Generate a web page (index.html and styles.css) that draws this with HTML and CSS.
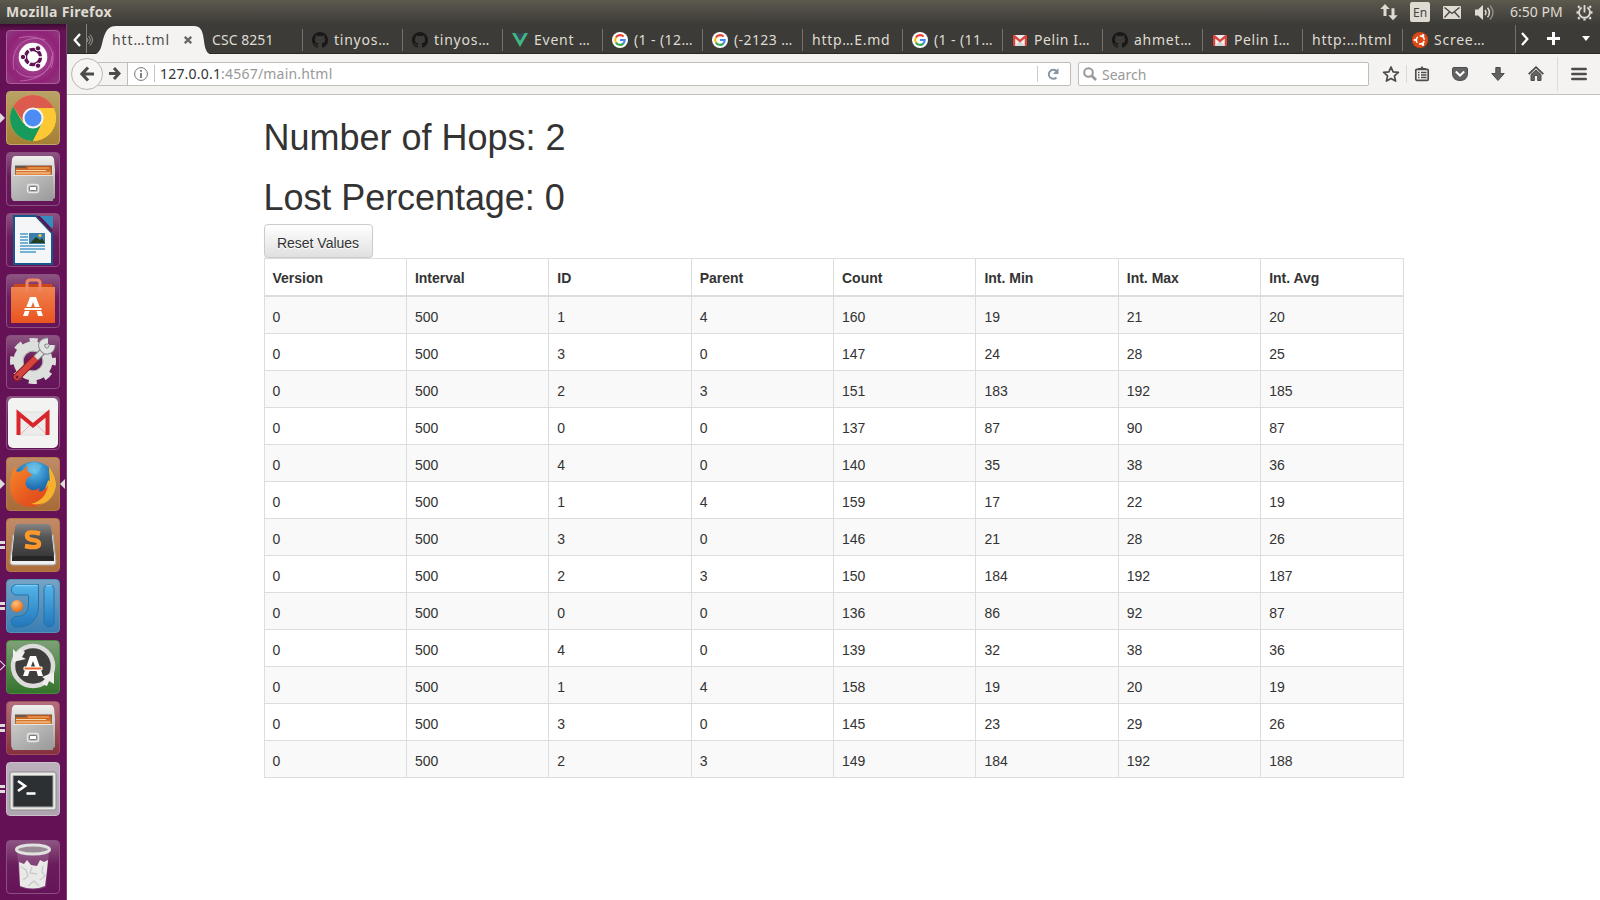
FILE: index.html
```html
<!DOCTYPE html>
<html lang="en">
<head>
<meta charset="utf-8">
<title>Mozilla Firefox</title>
<link rel="stylesheet" href="styles.css">
</head>
<body>
<svg class="defs" width="0" height="0" aria-hidden="true">
  <defs>
    <linearGradient id="metal" x1="0" y1="0" x2="0" y2="1"><stop offset="0" stop-color="#f0f0ef"/><stop offset="1" stop-color="#9b9b9a"/></linearGradient>
    <linearGradient id="drawer" x1="0" y1="0" x2="1" y2="1"><stop offset="0" stop-color="#c9c9c8"/><stop offset="1" stop-color="#999"/></linearGradient>
    <linearGradient id="folders" x1="0" y1="0" x2="0" y2="1"><stop offset="0" stop-color="#b9541d"/><stop offset="1" stop-color="#e98a3c"/></linearGradient>
    <linearGradient id="bag" x1="0" y1="0" x2="0" y2="1"><stop offset="0" stop-color="#f08350"/><stop offset="1" stop-color="#e9541f"/></linearGradient>
    <linearGradient id="dark" x1="0" y1="0" x2="0" y2="1"><stop offset="0" stop-color="#858585"/><stop offset=".4" stop-color="#555"/><stop offset="1" stop-color="#3a3a3a"/></linearGradient>
    <linearGradient id="blue" x1="0" y1="0" x2="0" y2="1"><stop offset="0" stop-color="#55b5e9"/><stop offset="1" stop-color="#2277bb"/></linearGradient>
    <linearGradient id="fox" x1="0" y1="0" x2="1" y2="1"><stop offset="0" stop-color="#f58a2b"/><stop offset=".6" stop-color="#e6551f"/><stop offset="1" stop-color="#d8451a"/></linearGradient>
    <radialGradient id="globe" cx=".5" cy=".2" r=".8"><stop offset="0" stop-color="#5bc3ee"/><stop offset=".5" stop-color="#2272b5"/><stop offset="1" stop-color="#123a78"/></radialGradient>
    <radialGradient id="ball" cx=".4" cy=".3" r=".7"><stop offset="0" stop-color="#ffc184"/><stop offset="1" stop-color="#ee6c0c"/></radialGradient>
    <symbol id="github" viewBox="0 0 16 16"><path fill="#191717" d="M8 0C3.58 0 0 3.58 0 8c0 3.54 2.29 6.53 5.47 7.59.4.07.55-.17.55-.38 0-.19-.01-.82-.01-1.49-2.01.37-2.53-.49-2.69-.94-.09-.23-.48-.94-.82-1.13-.28-.15-.68-.52-.01-.53.63-.01 1.08.58 1.23.82.72 1.21 1.87.87 2.33.66.07-.52.28-.87.51-1.07-1.78-.2-3.64-.89-3.64-3.95 0-.87.31-1.59.82-2.15-.08-.2-.36-1.02.08-2.12 0 0 .67-.21 2.2.82a7.6 7.6 0 0 1 4 0c1.53-1.04 2.2-.82 2.2-.82.44 1.1.16 1.92.08 2.12.51.56.82 1.27.82 2.15 0 3.07-1.87 3.75-3.65 3.95.29.25.54.73.54 1.48 0 1.07-.01 1.93-.01 2.2 0 .21.15.46.55.38A8.01 8.01 0 0 0 16 8c0-4.42-3.58-8-8-8z"/></symbol>
    <symbol id="google" viewBox="0 0 16 16"><circle cx="8" cy="8" r="8" fill="#fff"/><g fill="none" stroke-width="2.1"><path stroke="#ea4335" d="M11.6 4.6A4.8 4.8 0 0 0 3.9 5.6"/><path stroke="#fbbc05" d="M3.9 5.5a4.8 4.8 0 0 0 0 5"/><path stroke="#34a853" d="M3.9 10.4a4.8 4.8 0 0 0 7.4 1.2"/><path stroke="#4285f4" d="M11.2 11.7A4.8 4.8 0 0 0 12.7 8H8"/></g></symbol>
    <symbol id="gmail" viewBox="0 0 16 16"><path fill="#eee" d="M1 3h14v11H1z"/><path fill="#d5d5d5" d="m3 14 5-5 5 5z"/><path fill="#d9453a" d="M1 3h1.800L8 7.600 13.200 3H15v11h-2.200V6.500L8 10.500 3.200 6.500V14H1z"/></symbol>
    <symbol id="cabinet" viewBox="0 0 54 54"><path fill="url(#metal)" d="M9 4h36q2 0 3 3l1 11v27q0 2-2 2H7q-2 0-2-2V18L6 7q1-3 3-3z"/><path fill="#6b5748" d="M9 13.500h37v9.500H9z"/><path fill="url(#folders)" d="M9.500 16h10l1-2h25v9h-36z"/><path stroke="#f7d5aa" d="M10 18.500h30M10 21h34"/><path stroke="#ffba67" d="M22 16h21"/><path fill="url(#drawer)" d="M6 23h41v26H8q-2 0-2-3z"/><path stroke="#e4e4e4" d="M7 23.500h40"/><rect x="21.500" y="32.500" width="11" height="8" rx="2" fill="none" stroke="#e7e7e7" stroke-width="1.400"/><rect x="23.500" y="34.500" width="7" height="4" rx="1" fill="#fff" stroke="#777"/></symbol>
  </defs>
</svg>

<header class="panel">
  <span class="panel-title">Mozilla Firefox</span>
  <div class="indicators">
    <svg width="18" height="18" viewBox="0 0 18 18"><path fill="#dfdbd2" d="M5 1 .3 6H3.500v7h3V6h3.200zM13 17.200l4.700-5H14.500v-7h-3v7H8.300z"/></svg>
    <span class="lang">En</span>
    <svg width="18" height="13" viewBox="0 0 18 13"><rect width="18" height="13" rx="1" fill="#dfdbd2"/><path fill="none" stroke="#45433e" stroke-width="1.300" d="m1.500 1.500 7.500 6 7.500-6M1.500 11.500 6.500 6M16.500 11.500l-5-5.500"/></svg>
    <svg class="volume" width="20" height="17" viewBox="0 0 20 17"><path fill="#dfdbd2" d="M0 5.500h3L8 1v15l-5-4.500H0z"/><g fill="none" stroke-width="1.500"><path stroke="#dfdbd2" d="M10 6q2 2.500 0 5M12.500 3.800q4 4.700 0 9.400"/><path stroke="#8e8b84" d="M15 1.500q6 7 0 14"/></g></svg>
    <span class="clock">6:50 PM</span>
    <svg width="17" height="17" viewBox="0 0 17 17"><g fill="none" stroke="#dfdbd2"><path stroke-width="1.900" d="M5.700 3.500a5.500 5.500 0 1 0 5.600 0"/><path stroke-width="1.800" d="M8.500 1v7.500"/><path stroke-width="2.300" d="m3.600 3.600-1.500-1.500m11.300 1.500 1.500-1.500M2.500 8.500h-2m14 0h2M3.600 13.400l-1.500 1.500m11.300-1.500 1.500 1.500M8.500 14.500v2"/></g></svg>
  </div>
</header>

<div class="desktop">
<nav class="launcher">
  <div class="tile ubuntu"><svg viewBox="0 0 54 54"><g fill="none" stroke="#df9dd0" opacity=".5"><path d="M8 40C3 15 22 4 39 10"/><path d="M13 8c23-6 40 10 32 30"/><path d="M47 22c0 25-25 32-37 18"/><path d="M14 51C32 50 45 42 46 26"/></g><circle cx="27" cy="27" r="14.300" fill="#fff"/><circle cx="27" cy="27" r="7.500" fill="none" stroke="#611353" stroke-width="3.500"/><path stroke="#fff" stroke-width="1.500" d="M27 27H39M27 27l-6-10.400M27 27l-6 10.400"/><circle cx="27" cy="27" r="5.500" fill="#fff"/><g fill="#611353" stroke="#fff"><circle cx="17" cy="27" r="2.700"/><circle cx="32" cy="18.300" r="2.700"/><circle cx="32" cy="35.700" r="2.700"/></g></svg></div>
  <div class="tile chrome running"><svg viewBox="0 0 54 54"><circle cx="27" cy="27" r="23" fill="#fcc934"/><path fill="#dc5a4e" d="M7.100 15.500a23 23 0 0 1 39.800 0L48 17H27L18 32z"/><path fill="#169b5d" d="M7.100 15.500A23 23 0 0 0 27 50l9-17-9 4-10-5z"/><path fill="#fcc934" d="M27 17h20.700A23 23 0 0 1 27 50l9-18z"/><circle cx="27" cy="27" r="10.500" fill="#f5f5f5"/><circle cx="27" cy="27" r="8.500" fill="#4d8cf5"/></svg></div>
  <div class="tile"><svg><use href="#cabinet"/></svg></div>
  <div class="tile"><svg viewBox="0 0 54 54"><path fill="#f5f6f7" stroke="#14578a" stroke-width="2" d="M8 3h22l16 17v31H8z"/><path fill="#2d83b5" d="M30 3h16v17z"/><path fill="#5c1450" d="m30 3 16 17v-4L34 3z"/><path fill="#388bbf" d="M34 3h13v12z"/><path stroke="#4a9ac7" stroke-width="1.500" d="M14 21h8M14 24h8M14 27h8M14 30h8M14 33h25M14 36h25M14 39h16"/><path fill="#3c7faa" d="M23 20h16v11H23z"/><path fill="#243e20" d="m24 30 6-6 4 3 2-2 3 5z"/><circle cx="34" cy="22.500" r="1.500" fill="#f5ce42"/></svg></div>
  <div class="tile"><svg viewBox="0 0 54 54"><path fill="#c9451c" d="M7 14 8 10h38l1 4z"/><path fill="url(#bag)" d="M5 13h44v36H5z"/><path fill="none" stroke="#ef8767" stroke-width="3" d="M21 17V9q0-3 3-3h7q3 0 3 3v8"/><path fill="#fff" d="M24 23h6l7 19h-5l-1.500-5h-7L22 42h-5zm3 5-2.200 6h4.400z"/><path fill="#fff" stroke="#e9632c" d="M18 33.500h18v3H18z"/></svg></div>
  <div class="tile"><svg viewBox="0 0 54 54"><circle cx="27" cy="26" r="20.500" fill="none" stroke="#dcdedc" stroke-width="5" stroke-dasharray="8.050 8.050" stroke-dashoffset="4"/><circle cx="27" cy="26" r="14.500" fill="none" stroke="#dddfdd" stroke-width="10"/><circle cx="27" cy="26" r="10" fill="none" stroke="#aaa"/><path stroke="#8c1d1d" stroke-width="8" stroke-linecap="round" d="m11 42 19-19"/><path stroke="#d6443f" stroke-width="6" stroke-linecap="round" d="m11 42 19-19"/><path fill="none" stroke="#777" stroke-width="7" d="m30 23 8-8"/><path fill="none" stroke="#e0e2e2" stroke-width="5" d="m30 23 8-8"/><path fill="none" stroke="#8a8c8c" stroke-width="7" d="M42 6c-6 0-8 4-5 8s9 2 9-4"/><path fill="none" stroke="#e0e2e2" stroke-width="5" d="M42 6c-6 0-8 4-5 8s9 2 9-4"/><circle cx="11" cy="42" r="1.500" fill="#631b3c"/></svg></div>
  <div class="tile"><svg viewBox="0 0 54 54"><rect x="2" y="2" width="50" height="50" rx="5" fill="#f3f3f2"/><path fill="#ececeb" stroke="#ddd" d="M12 16h31v23H12z"/><path fill="none" stroke="#e3b4b0" d="m15 38 9-9m16 9-9-9"/><path fill="none" stroke="#d9262c" stroke-width="4" d="M12.500 39V17.500l14.500 12 14.500-12V39"/></svg></div>
  <div class="tile firefox running focused"><svg viewBox="0 0 54 54"><circle cx="28" cy="26" r="21.500" fill="url(#globe)"/><path fill="#85cbea" opacity=".4" d="M20 8q9-6 16 1l-5 8-9-2z"/><path fill="#f9c932" d="M43 10q12 16 2 30-9 11-20 8l13-13 4-11 2 2z"/><path fill="url(#fox)" d="M9 9q0 3 2 6l5-1q3-4 6-5-2 4 0 6 5 2 3 4-4 1-5 5-2 6 5 9 4 1 9-2-3 5 2 3 6-3 7-10l4 3q0 20-21 23Q6 50 4 31 3 20 9 9z"/><path fill="#f6b02d" d="m43 10 2 15-3-2q1 19-17 24 21 3 25-18 0-10-7-19z"/></svg></div>
  <div class="tile sublime multi"><svg viewBox="0 0 54 54"><path fill="#eee" stroke="#aaa" d="M7 17 4 44q0 3 3 3h40q3 0 3-3l-3-27z"/><path fill="#262626" d="m9 17-3 23v3h42v-3l-3-23z"/><path fill="url(#dark)" d="M13 6h28q3 0 4 3l3 28q0 1-2 1H8q-2 0-2-1l3-28q1-3 4-3z"/><path fill="none" stroke="#ff982b" stroke-width="4.500" d="M34 15.500q-13-3-13 2 0 4 6 4.500t6 4q0 5-14 2"/></svg></div>
  <div class="tile intellij multi"><svg viewBox="0 0 54 54"><path fill="url(#blue)" stroke="#2373a8" d="M10.500 5.500h22V26q0 22-22 22a5 5 0 0 1 0-10.500q12 0 12-12V17q0-1-1-1h-11a5 5 0 0 1 0-10.500z"/><rect x="38" y="5.500" width="10" height="42.500" rx="5" fill="url(#blue)" stroke="#2373a8"/><path stroke="#83cdf5" stroke-width="1.500" stroke-linecap="round" d="M10 6.500h21m10 0h4"/><circle cx="11" cy="27" r="6" fill="url(#ball)"/></svg></div>
  <div class="tile updater elsewhere"><svg viewBox="0 0 54 54"><circle cx="27" cy="26" r="20" fill="#3e3e3d" stroke="#dcdcda" stroke-width="4.500"/><path fill="#eeeeec" d="M7 9v13l13-3-4-2 3-5-5-3-3 4zM48 44V32l-12 5 3 2-3 5 5 2 2-5z"/><path fill="#fff" d="M24 16h6l7 20h-5l-1.500-5h-7L22 36h-5zm3 5-2.200 6h4.400z"/><path fill="#ed6527" stroke="#fff" d="M18 27h18v3H18z"/></svg></div>
  <div class="tile files multi"><svg><use href="#cabinet"/></svg></div>
  <div class="tile terminal multi"><svg viewBox="0 0 54 54"><rect x="4" y="10" width="46" height="38" rx="2" fill="#e9e9e8" stroke="#8b8b89"/><path fill="#2d3032" stroke="#aaa" d="M7 13.500h40V45H7z"/><path fill="none" stroke="#fff" stroke-width="2.700" d="m12 19 7 5-7 5M20.500 31.500h9"/></svg></div>
  <div class="tile trash"><svg viewBox="0 0 54 54"><path fill="#a97aa2" opacity=".4" d="m11 12 3 35q13 5 26 0l3-35z"/><path fill="#e9e9e7" d="m14 46-1-24 5 2 3-4 4 5 6 1 3-6 4 2 4-2-1 10-2 16q-12 5-25 0z"/><path fill="none" stroke="#cacac8" stroke-width="1.300" d="m15 27 5 3 2 6-5 4m9-13-2 6 7 1m6-8-1 6 3 4-5 4m-12 6 6-5 5 5"/><ellipse cx="27" cy="9.500" rx="16.500" ry="4.500" fill="#9a8a95" stroke="#e1e2df" stroke-width="3"/></svg></div>
</nav>

<main class="browser">
  <div class="tabs">
    <div class="scroll-left"><svg width="8" height="14" viewBox="0 0 8 14"><path fill="none" stroke="#fff" stroke-width="2.300" d="M7 1 1.700 7 7 13"/></svg></div>
    <div class="sound"><svg width="6" height="12" viewBox="0 0 6 12"><path fill="none" stroke="#999" d="M0 4q2 2 0 4M1.500 2q3.500 4 0 8M3 .5q5 5.500 0 11"/></svg></div>
    <div class="tab active">
      <svg class="tab-shape" width="122" height="29" viewBox="0 0 122 29"><path fill="#f4f3f1" d="M0 29c11-1 9-13 13-21 2-5 5-8 11-8h78c6 0 8 4 9 9 2 9 1 19 10 20z"/></svg>
      <span>htt…tml</span><svg class="close" width="8" height="8" viewBox="0 0 8 8"><path stroke="#686868" stroke-width="2.300" d="m.8.8 6.400 6.400M7.200.8.8 7.200"/></svg>
    </div>
    <div class="tab second"><span>CSC 8251</span></div>
    <div class="tab"><svg><use href="#github"/></svg><span>tinyos…</span></div>
    <div class="tab"><svg><use href="#github"/></svg><span>tinyos…</span></div>
    <div class="tab"><svg viewBox="0 0 16 16"><path fill="#41b883" d="M0 1h3.500L8 8.700 12.500 1H16L8 15z"/><path fill="#35495e" d="M3.500 1h3L8 3.600 9.500 1h3L8 8.700z"/></svg><span>Event …</span></div>
    <div class="tab"><svg><use href="#google"/></svg><span class="calc">(1 - (12…</span></div>
    <div class="tab"><svg><use href="#google"/></svg><span class="calc">(-2123 …</span></div>
    <div class="tab"><span>http…E.md</span></div>
    <div class="tab"><svg><use href="#google"/></svg><span class="calc">(1 - (11…</span></div>
    <div class="tab"><svg><use href="#gmail"/></svg><span class="mail">Pelin I…</span></div>
    <div class="tab"><svg><use href="#github"/></svg><span>ahmet…</span></div>
    <div class="tab"><svg><use href="#gmail"/></svg><span class="mail">Pelin I…</span></div>
    <div class="tab"><span>http:…html</span></div>
    <div class="tab last"><svg viewBox="0 0 16 16"><circle cx="8" cy="8" r="8" fill="#dd4814"/><circle cx="8.300" cy="8" r="4" fill="none" stroke="#fff" stroke-width="1.500" stroke-dasharray="6.400 2" stroke-dashoffset="-1"/><g fill="#fff"><circle cx="2.800" cy="8" r="1.200"/><circle cx="11" cy="3.200" r="1.200"/><circle cx="11" cy="12.800" r="1.200"/></g></svg><span>Scree…</span></div>
    <div class="tab-tools">
      <svg width="8" height="14" viewBox="0 0 8 14"><path fill="none" stroke="#fff" stroke-width="2.300" d="m1 1 5.300 6L1 13"/></svg>
      <svg width="13" height="13" viewBox="0 0 13 13"><path stroke="#fff" stroke-width="3" d="M6.500 0v13M0 6.500h13"/></svg>
      <svg width="8" height="5" viewBox="0 0 8 5"><path fill="#fff" d="M0 0h8L4 5z"/></svg>
    </div>
  </div>

  <div class="toolbar">
    <div class="back"><svg width="14" height="16" viewBox="0 0 14 16"><path fill="none" stroke="#4c4c4c" stroke-width="3.200" d="M8 1.500 2 8l6 6.500M2 8h12"/></svg></div>
    <div class="address">
      <div class="forward"><svg width="12" height="13" viewBox="0 0 12 13"><path fill="none" stroke="#4c4c4c" stroke-width="3" d="M0 6.500h10M5 1l5 5.500L5 12"/></svg></div>
      <svg class="info" width="14" height="14" viewBox="0 0 14 14"><circle cx="7" cy="7" r="6.400" fill="none" stroke="#737373"/><path stroke="#737373" stroke-width="1.800" d="M7 6v5M7 3v1.800"/></svg>
      <span class="url">127.0.0.1<span class="path">:4567/main.html</span></span>
      <div class="reload"><svg width="12" height="12" viewBox="0 0 12 12"><path fill="none" stroke="#8796a5" stroke-width="2" d="M9.500 9.500a4.500 4.500 0 1 1 .3-6"/><path fill="#8796a5" d="M11.500 0v6H6z"/></svg></div>
    </div>
    <div class="search"><svg width="14" height="14" viewBox="0 0 14 14"><circle cx="5.500" cy="5.500" r="4.300" fill="none" stroke="#999" stroke-width="2"/><path stroke="#999" stroke-width="2.600" d="m8.500 8.500 4.500 4.500"/></svg><span>Search</span></div>
    <div class="actions">
      <svg width="18" height="18" viewBox="0 0 18 18"><path fill="none" stroke="#4c4c4c" stroke-width="1.700" stroke-linejoin="round" d="m9 2 2.100 4.900 5.300.5-4 3.500 1.200 5.200L9 13.400l-4.600 2.700 1.200-5.200-4-3.500 5.300-.5z"/></svg>
      <i class="rule short"></i>
      <svg class="library" width="16" height="16" viewBox="0 0 16 16"><rect x="1.800" y="3.300" width="12.400" height="11" rx="1" fill="none" stroke="#4c4c4c" stroke-width="1.700"/><path fill="#4c4c4c" d="M4 4V2h2.500L8 0l1.500 2H12v2z"/><path stroke="#4c4c4c" stroke-width="1.500" d="M4 6.500h1.500M7 6.500h5.500M4 9h1.500M7 9h5.500M4 11.500h1.500M7 11.500h5.500"/></svg>
      <svg width="16" height="14" viewBox="0 0 16 14"><path fill="#636363" stroke="#4c4c4c" d="M2 .5h12q1.500 0 1.500 1.500v4q0 7.500-7.500 7.500T.5 6V2Q.5.500 2 .5z"/><path fill="none" stroke="#fff" stroke-width="2" d="m3.800 4.500 4.200 4 4.200-4"/></svg>
      <svg width="14" height="14" viewBox="0 0 14 14"><path fill="#636363" stroke="#4c4c4c" d="M4.800.5h4.400v6h4L7 13.500.8 6.500h4z"/></svg>
      <svg width="16" height="15" viewBox="0 0 16 15"><path fill="none" stroke="#4c4c4c" stroke-width="1.800" d="m.7 8.200 7.300-7 7.300 7"/><path fill="#636363" stroke="#4c4c4c" d="M3 8.500 8 4l5 4.500v6H9.700v-5H6.300v5H3z"/></svg>
      <i class="rule"></i>
      <svg width="16" height="14" viewBox="0 0 16 14"><path stroke="#4c4c4c" stroke-width="2.500" stroke-linecap="round" d="M1.300 2h13.400M1.300 7h13.400M1.300 12h13.400"/></svg>
    </div>
  </div>

  <section class="page">
    <div class="container">
      <h1>Number of Hops: 2</h1>
      <h1>Lost Percentage: 0</h1>
      <button class="reset" type="button">Reset Values</button>
      <table>
        <thead><tr><th>Version</th><th>Interval</th><th>ID</th><th>Parent</th><th>Count</th><th>Int. Min</th><th>Int. Max</th><th>Int. Avg</th></tr></thead>
        <tbody>
          <tr><td>0</td><td>500</td><td>1</td><td>4</td><td>160</td><td>19</td><td>21</td><td>20</td></tr>
          <tr><td>0</td><td>500</td><td>3</td><td>0</td><td>147</td><td>24</td><td>28</td><td>25</td></tr>
          <tr><td>0</td><td>500</td><td>2</td><td>3</td><td>151</td><td>183</td><td>192</td><td>185</td></tr>
          <tr><td>0</td><td>500</td><td>0</td><td>0</td><td>137</td><td>87</td><td>90</td><td>87</td></tr>
          <tr><td>0</td><td>500</td><td>4</td><td>0</td><td>140</td><td>35</td><td>38</td><td>36</td></tr>
          <tr><td>0</td><td>500</td><td>1</td><td>4</td><td>159</td><td>17</td><td>22</td><td>19</td></tr>
          <tr><td>0</td><td>500</td><td>3</td><td>0</td><td>146</td><td>21</td><td>28</td><td>26</td></tr>
          <tr><td>0</td><td>500</td><td>2</td><td>3</td><td>150</td><td>184</td><td>192</td><td>187</td></tr>
          <tr><td>0</td><td>500</td><td>0</td><td>0</td><td>136</td><td>86</td><td>92</td><td>87</td></tr>
          <tr><td>0</td><td>500</td><td>4</td><td>0</td><td>139</td><td>32</td><td>38</td><td>36</td></tr>
          <tr><td>0</td><td>500</td><td>1</td><td>4</td><td>158</td><td>19</td><td>20</td><td>19</td></tr>
          <tr><td>0</td><td>500</td><td>3</td><td>0</td><td>145</td><td>23</td><td>29</td><td>26</td></tr>
          <tr><td>0</td><td>500</td><td>2</td><td>3</td><td>149</td><td>184</td><td>192</td><td>188</td></tr>
        </tbody>
      </table>
    </div>
  </section>
</main>
</div>
</body>
</html>
```

FILE: styles.css
```css
*, *::before, *::after { box-sizing: border-box; }
body { margin: 0; width: 1600px; height: 900px; overflow: hidden; display: flex; flex-direction: column; background: #fff; font: 14px/20px "Noto Sans", "Open Sans", sans-serif; }
svg { display: block; flex: none; }
.defs { position: absolute; }

/* System panel */
.panel { height: 24px; flex: none; display: flex; justify-content: space-between; align-items: center; padding: 0 7px 0 6px; background: linear-gradient(#5d5b4c 0, #59564d 2px, #3d3c37 100%); color: #dfdbd2; }
.panel-title { font-weight: 700; font-size: 14px; letter-spacing: .3px; }
.indicators { display: flex; align-items: center; }
.lang { width: 20px; height: 20px; margin: 0 13px 0 12px; border-radius: 2px; background: #dfdbd2; color: #45433e; font-size: 12px; line-height: 21px; text-align: center; }
.volume { margin-left: 14px; }
.clock { width: 53px; margin: 0 13px 0 15px; white-space: nowrap; }

.desktop { flex: 1; display: flex; min-height: 0; }

/* Launcher */
.launcher { width: 67px; flex: none; display: flex; flex-direction: column; gap: 7px; padding: 6px 6px 0; background: linear-gradient(#3c0b32, #651155 7px); border-right: 1px solid #813d74; }
.tile { position: relative; width: 54px; height: 54px; flex: none; border-radius: 4px; background: linear-gradient(#8c5581, #6a1c5b 45%, #65145a); border: 1px solid #8b4e80; }
.tile > svg { width: 54px; height: 54px; margin: -1px; }
.ubuntu { background: radial-gradient(#b25aa0, #902277 70%, #8d3c7d); border-color: #ab5e9b; }
.chrome { background: linear-gradient(#b9a267, #a58033); border-color: #bea66b; }
.firefox { background: linear-gradient(#bf8c68, #a76b37); border-color: #b87a48; }
.sublime { background: linear-gradient(#c18b68, #ab6d3a); border-color: #b87a48; }
.intellij { background: linear-gradient(#76a3c4, #397eb4); border-color: #5590b9; }
.updater { background: linear-gradient(#7ea078, #34742c); border-color: #4f8745; }
.files { background: linear-gradient(#b46f7c, #85303d); border-color: #9c4d5a; }
.terminal { background: linear-gradient(#bcb0bd, #aea5b0); border-color: #c9bec9; }
.trash { margin-top: 17px; }
.running::before, .focused::after, .elsewhere::before, .multi::before { content: ""; position: absolute; left: -7px; top: 21px; }
.running::before { border: 5px solid transparent; border-left-color: #ddd; border-right: 0; }
.focused::after { left: auto; right: -6px; border: 5px solid transparent; border-right-color: #ddd; border-left: 0; }
.multi::before { top: 22px; width: 5px; height: 8px; border: solid #ddd; border-width: 3px 0; }
.elsewhere::before { left: -10px; width: 7px; height: 7px; border: solid #ddd; border-width: 1px 1px 0 0; transform: rotate(45deg); }

.browser { flex: 1; min-width: 0; display: flex; flex-direction: column; }

/* Tabs */
.tabs { height: 30px; flex: none; display: flex; background: #3c3b37; border-bottom: 1px solid #292825; }
.scroll-left { width: 20px; padding: 9px 0 0 6px; border-right: 1px solid #85827c; }
.sound { width: 5px; padding-top: 10px; }
.tab { position: relative; width: 100px; flex: none; display: flex; gap: 6px; padding: 5px 0 0 10px; color: #dfdbd2; white-space: nowrap; }
.tab > span { line-height: 22px; font-size: 14px; letter-spacing: .75px; }
.tab:not(.active)::after { content: ""; position: absolute; right: -1px; top: 5px; width: 1px; height: 22px; background: #74716b; }
.tab > svg:not(.tab-shape):not(.close) { width: 16px; height: 16px; margin-top: 3px; }
.active { width: 110px; padding-left: 20px; color: #4c4c4c; }
.active > span, .close { position: relative; }
.active > span { width: 60px; letter-spacing: .9px; }
.tab-shape { position: absolute; left: 0; top: 2px; }
.close { margin: 7px 0 0 6px; }
.tab.second > span { letter-spacing: .05px; }
.tab.last { width: 113px; }
.tab.last::after { top: 1px !important; height: 28px !important; }
.tab > .calc { letter-spacing: .4px; }
.tab > .mail { letter-spacing: .55px; }
.tab-tools { flex: 1; display: flex; align-items: center; gap: 18px; padding-left: 6px; }
.tab-tools svg:last-child { margin-left: 4px; }

/* Navigation toolbar */
.toolbar { height: 41px; flex: none; display: flex; align-items: center; padding: 0 0 1px 4px; background: #f4f3f1; border-bottom: 1px solid #c4c1bc; }
.back { position: relative; z-index: 1; width: 32px; height: 32px; flex: none; display: grid; place-items: center; background: #f7f6f5; border: 1px solid #bab7b3; border-radius: 50%; }
.address, .search { height: 24px; display: flex; align-items: center; background: #fff; border: 1px solid #c1bdb8; border-radius: 2px; font-size: 14px; }
.address { width: 974px; flex: none; margin-left: -6px; }
.forward { width: 30px; height: 22px; display: grid; place-items: center; padding-left: 5px; background: #f4f3f1; border-right: 1px solid #c1bdb8; }
.info { margin-left: 6px; }
.url { margin-left: 6px; padding: 1px 0 0 5px; line-height: 16px; letter-spacing: .2px; border-left: 1px solid #c4c4c4; color: #333; }
.path { color: #999; }
.reload { width: 33px; height: 16px; margin-left: auto; display: grid; place-items: center; padding-right: 2px; border-left: 1px solid #ccc; }
.search { width: 291px; flex: none; margin-left: 7px; padding-left: 4px; gap: 5px; color: #999; }
.search span { padding-top: 2px; }
.actions { flex: 1; display: flex; align-items: center; padding: 0 13px; }
.actions > svg:nth-of-type(n+3) { margin-left: 22px; }
.actions > svg:nth-of-type(4) { margin-left: 23px; }
.actions > svg:nth-of-type(5) { margin-left: 23px; }
.actions > svg:nth-of-type(6) { margin-left: 13px; }
.rule { width: 1px; height: 34px; margin-left: 13px; background: #dcdad7; }
.short { height: 18px; margin: 0 7px 0 6px; }

/* Page content */
.page { flex: 1; color: #333; font-family: "Liberation Sans", Arial, sans-serif; }
.container { width: 1170px; margin: 0 auto; padding: 23.300px 15px 0; }
h1 { height: 39.600px; margin: 0 0 20px; font-size: 36px; font-weight: 400; line-height: 39.600px; }
h1 + h1 { margin-bottom: 6.700px; letter-spacing: -.06px; }
.reset { display: block; width: 109px; height: 34px; padding: 4px 0 0; border: 1px solid #ccc; border-radius: 4px; background: linear-gradient(#fff, #e0e0e0); box-shadow: 0 1px 1px rgba(0,0,0,.08); color: #333; font: 14px/20px "Liberation Sans", Arial, sans-serif; text-shadow: 0 1px 0 #fff; }
table { width: 1140px; table-layout: fixed; border-collapse: collapse; border: 1px solid #ddd; }
th, td { padding: 10px 8px 6px; border: 1px solid #ddd; text-align: left; line-height: 20px; }
th { padding: 9px 8px 7px; border-bottom-width: 2px; }
tbody tr:nth-child(odd) { background: #f9f9f9; }
```
